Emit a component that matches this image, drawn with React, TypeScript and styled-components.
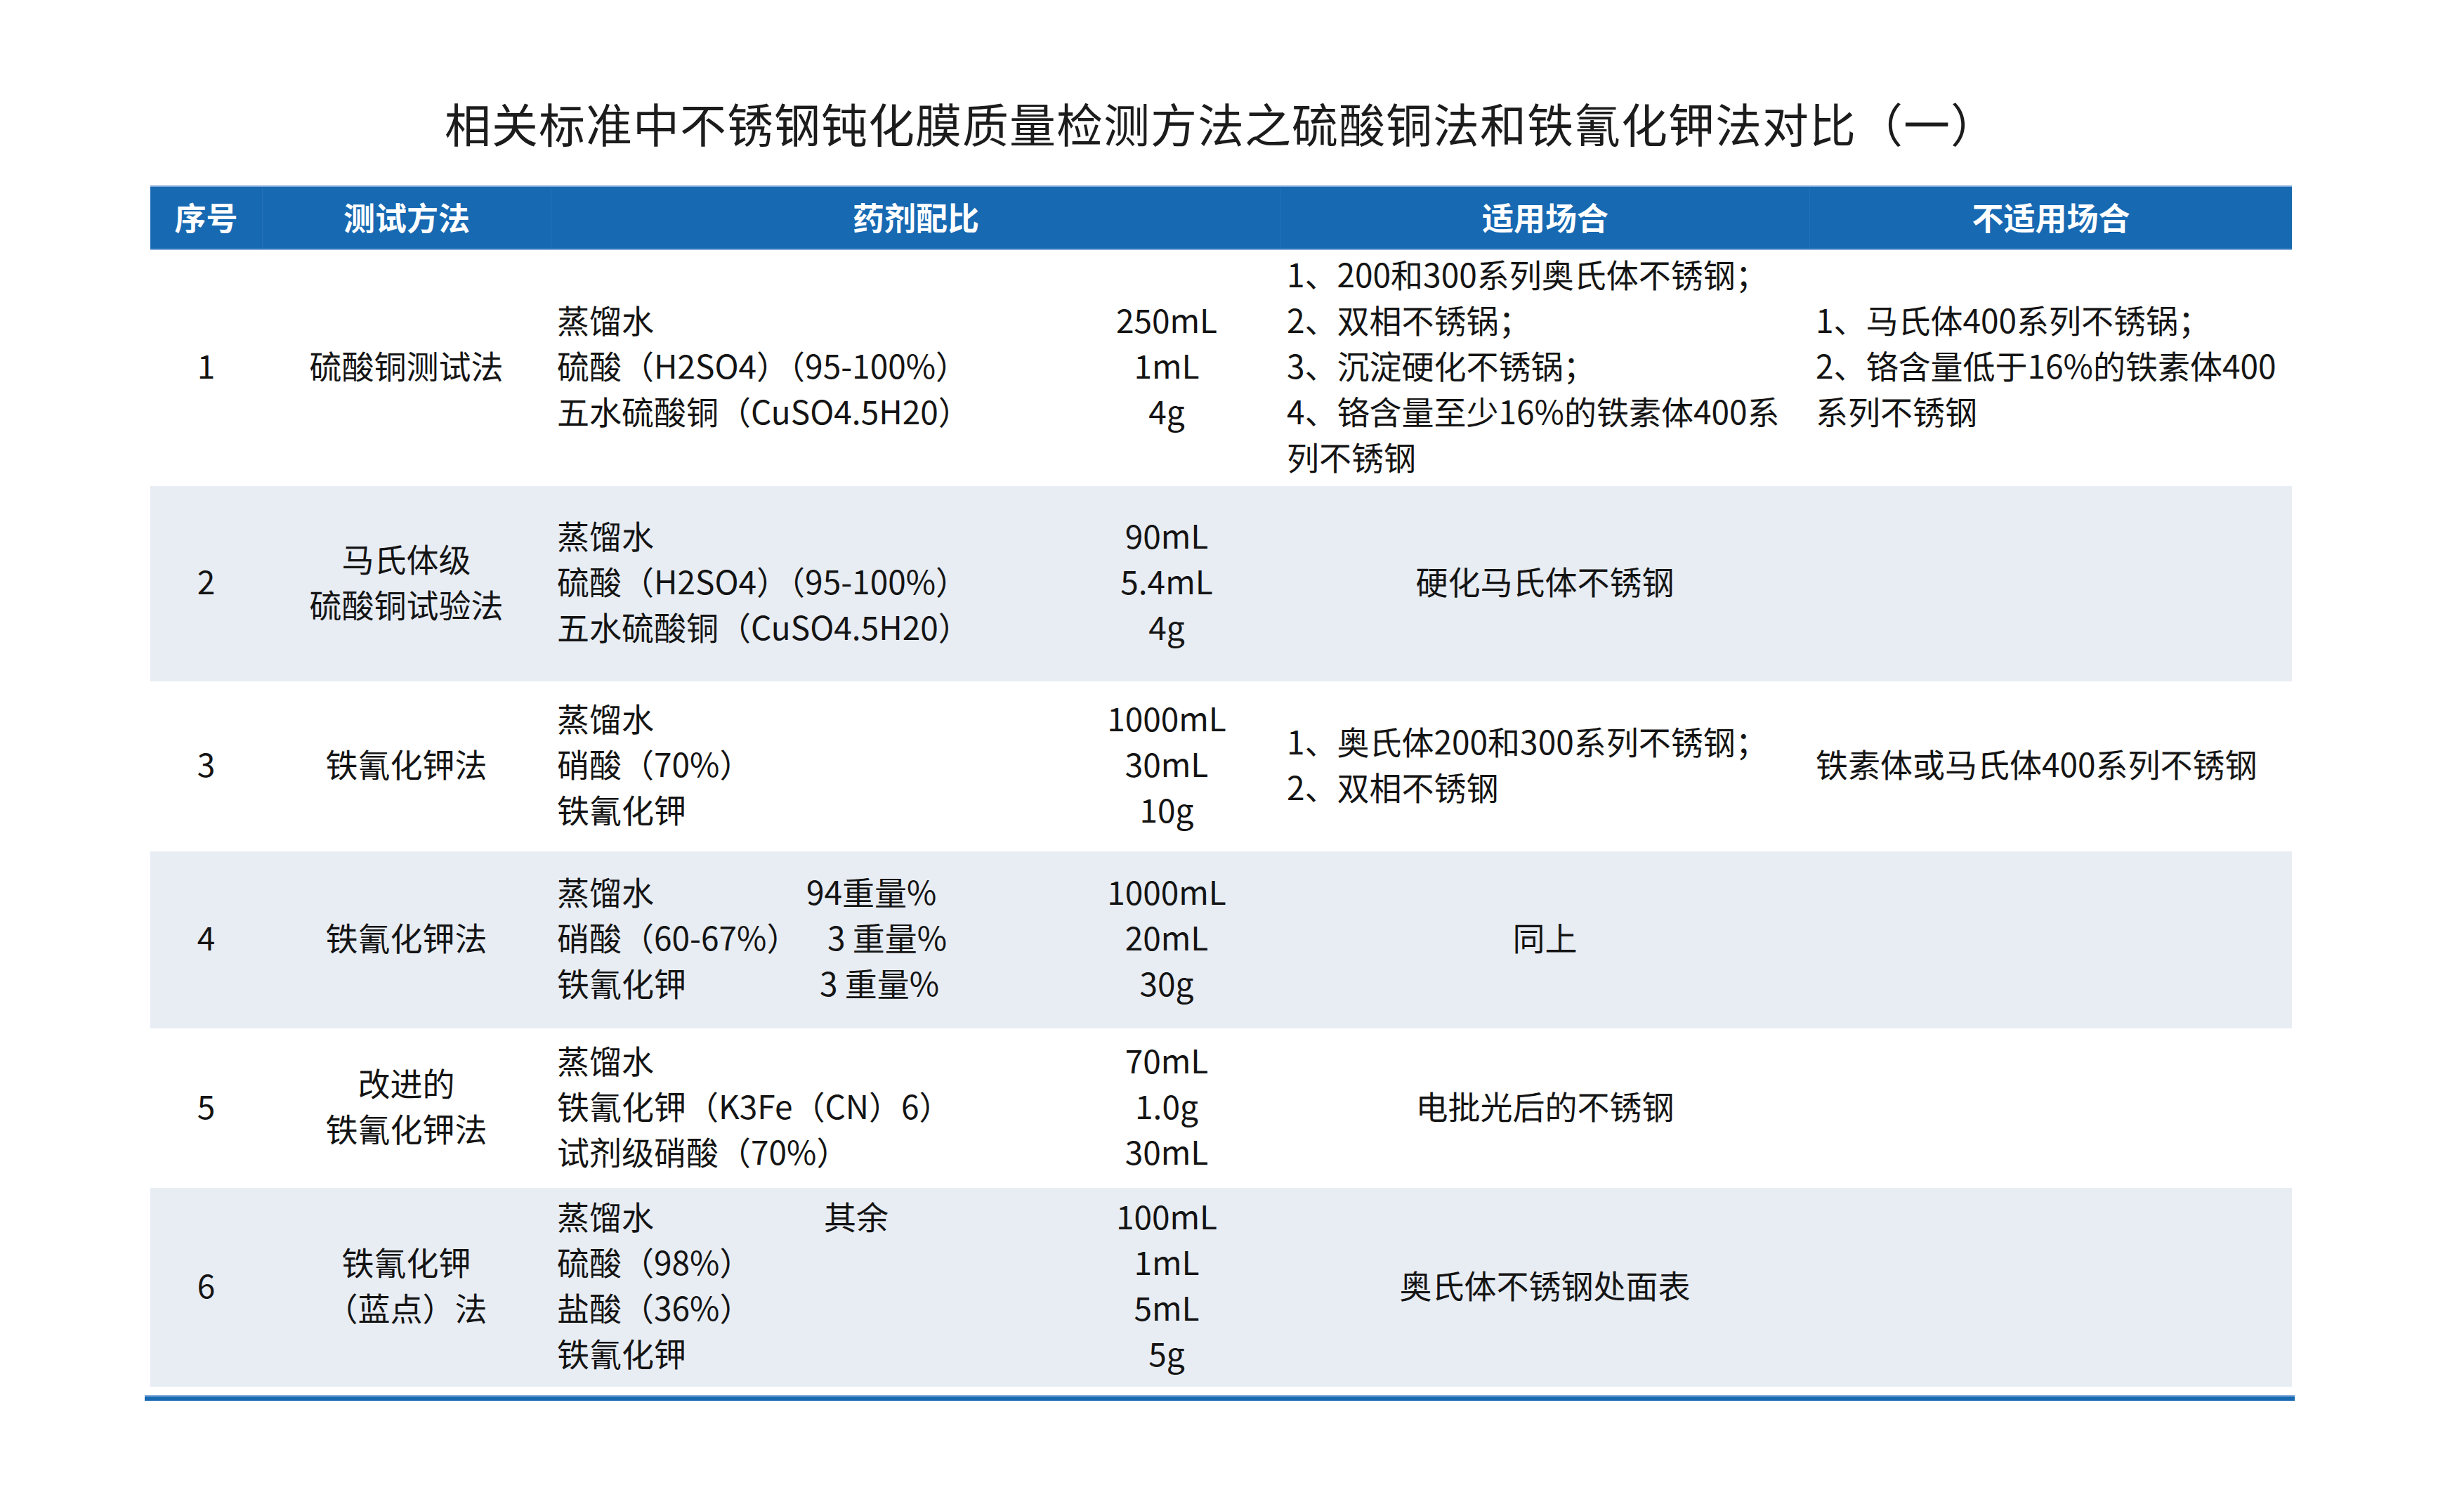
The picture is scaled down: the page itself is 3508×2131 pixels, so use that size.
import styled, { createGlobalStyle } from 'styled-components';

const GlobalStyle = createGlobalStyle`
  html, body {
    margin: 0;
    padding: 0;
    background: #ffffff;
  }
  body {
    font-family: "Noto Sans CJK SC", "Noto Sans", sans-serif;
    color: #141414;
  }
`;

// column widths: no / method / reagent / amount / suitable / unsuitable
const COLS = '159px 411px 715px 324px 753px 687px';
const BLUE = '#1769b2';

type Reagent = { name: string; extra?: string; at?: number };
type Note = { lines: string[]; align: 'left' | 'center' };

type Row = {
  no: string;
  height: number;
  shade: boolean;
  method: string[];
  reagents: Reagent[];
  amounts: string[];
  suitable?: Note;
  unsuitable?: Note;
};

const rows: Row[] = [
  {
    no: '1',
    height: 336,
    shade: false,
    method: ['硫酸铜测试法'],
    reagents: [{ name: '蒸馏水' }, { name: '硫酸（H2SO4）（95-100%）' }, { name: '五水硫酸铜（CuSO4.5H20）' }],
    amounts: ['250mL', '1mL', '4g'],
    suitable: {
      align: 'left',
      lines: ['1、200和300系列奥氏体不锈钢；', '2、双相不锈锅；', '3、沉淀硬化不锈锅；', '4、铬含量至少16%的铁素体400系', '列不锈钢'],
    },
    unsuitable: {
      align: 'left',
      lines: ['1、马氏体400系列不锈锅；', '2、铬含量低于16%的铁素体400', '系列不锈钢'],
    },
  },
  {
    no: '2',
    height: 278,
    shade: true,
    method: ['马氏体级', '硫酸铜试验法'],
    reagents: [{ name: '蒸馏水' }, { name: '硫酸（H2SO4）（95-100%）' }, { name: '五水硫酸铜（CuSO4.5H20）' }],
    amounts: ['90mL', '5.4mL', '4g'],
    suitable: { align: 'center', lines: ['硬化马氏体不锈钢'] },
  },
  {
    no: '3',
    height: 242,
    shade: false,
    method: ['铁氰化钾法'],
    reagents: [{ name: '蒸馏水' }, { name: '硝酸（70%）' }, { name: '铁氰化钾' }],
    amounts: ['1000mL', '30mL', '10g'],
    suitable: { align: 'left', lines: ['1、奥氏体200和300系列不锈钢；', '2、双相不锈钢'] },
    unsuitable: { align: 'left', lines: ['铁素体或马氏体400系列不锈钢'] },
  },
  {
    no: '4',
    height: 252,
    shade: true,
    method: ['铁氰化钾法'],
    reagents: [
      { name: '蒸馏水', extra: '94重量%', at: 355 },
      { name: '硝酸（60-67%）', extra: '3 重量%', at: 385 },
      { name: '铁氰化钾', extra: '3 重量%', at: 374 },
    ],
    amounts: ['1000mL', '20mL', '30g'],
    suitable: { align: 'center', lines: ['同上'] },
  },
  {
    no: '5',
    height: 227,
    shade: false,
    method: ['改进的', '铁氰化钾法'],
    reagents: [{ name: '蒸馏水' }, { name: '铁氰化钾（K3Fe（CN）6）' }, { name: '试剂级硝酸（70%）' }],
    amounts: ['70mL', '1.0g', '30mL'],
    suitable: { align: 'center', lines: ['电批光后的不锈钢'] },
  },
  {
    no: '6',
    height: 283,
    shade: true,
    method: ['铁氰化钾', '（蓝点）法'],
    reagents: [
      { name: '蒸馏水', extra: '其余', at: 380 },
      { name: '硫酸（98%）' },
      { name: '盐酸（36%）' },
      { name: '铁氰化钾' },
    ],
    amounts: ['100mL', '1mL', '5mL', '5g'],
    suitable: { align: 'center', lines: ['奥氏体不锈钢处面表'] },
  },
];

export default function App() {
  return (
    <>
      <GlobalStyle />
      <Page>
        <Sheet>
          <Title>相关标准中不锈钢钝化膜质量检测方法之硫酸铜法和铁氰化钾法对比（一）</Title>
          <HeaderRow>
            <HeadCell>序号</HeadCell>
            <HeadCell>测试方法</HeadCell>
            <HeadCell $span={2}>药剂配比</HeadCell>
            <HeadCell>适用场合</HeadCell>
            <HeadCell>不适用场合</HeadCell>
          </HeaderRow>
          {rows.map((row) => (
            <BodyRow key={row.no} $height={row.height} $shade={row.shade}>
              <Cell $align="center">
                <Line>{row.no}</Line>
              </Cell>
              <Cell $align="center">
                {row.method.map((m) => (
                  <Line key={m}>{m}</Line>
                ))}
              </Cell>
              <Cell $align="left">
                {row.reagents.map((r) => (
                  <ReagentLine key={r.name} $at={r.at ?? 0}>
                    <span>{r.name}</span>
                    {r.extra && <span>{r.extra}</span>}
                  </ReagentLine>
                ))}
              </Cell>
              <Cell $align="center">
                {row.amounts.map((a, i) => (
                  <Line key={i}>{a}</Line>
                ))}
              </Cell>
              <Cell $align={row.suitable?.align ?? 'left'}>
                {row.suitable?.lines.map((l) => (
                  <Line key={l}>{l}</Line>
                ))}
              </Cell>
              <Cell $align={row.unsuitable?.align ?? 'left'}>
                {row.unsuitable?.lines.map((l) => (
                  <Line key={l}>{l}</Line>
                ))}
              </Cell>
            </BodyRow>
          ))}
          <BottomRule />
        </Sheet>
      </Page>
    </>
  );
}

const Page = styled.main`
  width: 3508px;
  height: 2131px;
  padding: 128px 0 0 214px;
  box-sizing: border-box;
`;

const Sheet = styled.section`
  width: 3049px;
  display: flex;
  flex-direction: column;
`;

const Title = styled.h1`
  margin: 0 0 44px;
  font-size: 66px;
  letter-spacing: 1px;
  line-height: 92px;
  font-weight: 400;
  color: #1c1c1c;
  text-align: center;
  white-space: nowrap;
`;

const HeaderRow = styled.div`
  display: grid;
  grid-template-columns: ${COLS};
  height: 92px;
  box-sizing: border-box;
  background: ${BLUE};
  border-top: 2px solid #7fa9d8;
  border-bottom: 2px solid #7fa9d8;
`;

const HeadCell = styled.div<{ $span?: number }>`
  grid-column: span ${(p) => p.$span ?? 1};
  display: flex;
  align-items: center;
  justify-content: center;
  padding-bottom: 4px;
  color: #ffffff;
  font-size: 45px;
  font-weight: 700;
  white-space: nowrap;
  & + & {
    border-left: 1px solid rgba(255, 255, 255, 0.06);
  }
`;

const BodyRow = styled.div<{ $height: number; $shade: boolean }>`
  display: grid;
  grid-template-columns: ${COLS};
  height: ${(p) => p.$height}px;
  background: ${(p) => (p.$shade ? '#e8edf4' : '#ffffff')};
`;

const Cell = styled.div<{ $align: 'left' | 'center' }>`
  display: flex;
  flex-direction: column;
  justify-content: center;
  align-items: ${(p) => (p.$align === 'center' ? 'center' : 'flex-start')};
  padding: 0 9px 9px;
  font-size: 46px;
  line-height: 65px;
  color: #141414;
  white-space: nowrap;
`;

const Line = styled.div``;

const ReagentLine = styled.div<{ $at: number }>`
  display: grid;
  grid-template-columns: ${(p) => (p.$at ? `${p.$at}px auto` : 'auto')};
`;

const BottomRule = styled.div`
  margin: 12px -4px 0 -8px;
  height: 8px;
  box-sizing: border-box;
  background: ${BLUE};
  border-top: 2px solid #7fa9d8;
`;
